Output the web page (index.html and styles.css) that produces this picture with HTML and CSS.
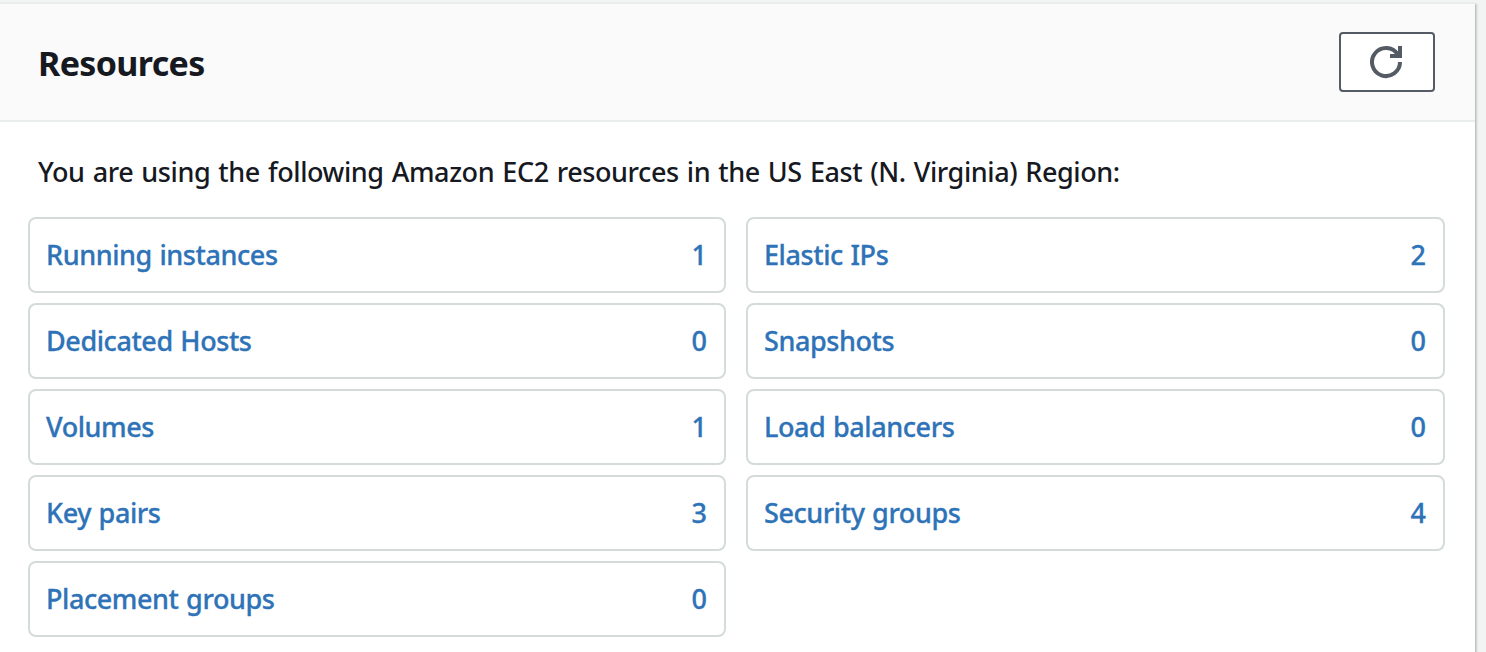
FILE: index.html
```html
<!DOCTYPE html>
<html lang="en">
<head>
<meta charset="utf-8">
<title>Resources</title>
<link rel="stylesheet" href="styles.css">
</head>
<body>
<main class="panel">
  <header class="panel-header">
    <h1 class="title">Resources</h1>
    <button class="refresh" aria-label="Refresh">
      <svg width="36" height="36" viewBox="0 0 36 36" fill="none" stroke="#545b64" stroke-width="4"><path d="M31 18A14 14 0 1 1 28.800 10.500"/><path d="M21 12H31V2"/><path d="M26 7L31 12" stroke-width="3"/><path d="M29 12H33V14H29Z" fill="#545b64" stroke="none"/></svg>
    </button>
  </header>
  <section class="panel-body">
    <p class="intro">You are using the following Amazon EC2 resources in the US East (N. Virginia) Region:</p>
    <div class="grid">
      <a class="card"><span>Running instances</span><b>1</b></a>
      <a class="card"><span>Elastic IPs</span><b>2</b></a>
      <a class="card"><span>Dedicated Hosts</span><b>0</b></a>
      <a class="card"><span>Snapshots</span><b>0</b></a>
      <a class="card"><span>Volumes</span><b>1</b></a>
      <a class="card"><span>Load balancers</span><b>0</b></a>
      <a class="card"><span>Key pairs</span><b>3</b></a>
      <a class="card"><span>Security groups</span><b>4</b></a>
      <a class="card"><span>Placement groups</span><b>0</b></a>
    </div>
  </section>
</main>
</body>
</html>
```

FILE: styles.css
```css
* { box-sizing: border-box; }
body {
  margin: 0;
  height: 652px;
  overflow: hidden;
  padding-top: 2px;
  background: #f2f3f3;
  color: #16191f;
  font-family: "Noto Sans", "Open Sans", sans-serif;
}
.panel {
  width: 1475px;
  height: 660px;
  background: #fff;
  border-top: 2px solid #eaeded;
  box-shadow: 0 2px 2px 0 rgba(0, 28, 36, .3), 2px 2px 2px 0 rgba(0, 28, 36, .15);
}
.panel-header {
  display: flex;
  align-items: center;
  justify-content: space-between;
  height: 118px;
  padding: 0 40px 0 38px;
  background: #fafafa;
  border-bottom: 2px solid #eaeded;
}
.title { margin: 0; padding-top: 2px; font-size: 34px; line-height: 46px; font-weight: 700; letter-spacing: -0.65px; }
.refresh {
  display: flex;
  align-items: center;
  justify-content: center;
  width: 96px;
  height: 60px;
  padding: 0;
  background: #fff;
  border: 2px solid #545b64;
  border-radius: 4px;
}
.panel-body { padding: 30px 30px 0 28px; }
.intro { margin: 0; padding-left: 10px; font-size: 27px; line-height: 40px; font-weight: 500; letter-spacing: -0.42px; word-spacing: 1.5px; white-space: nowrap; }
.grid { display: grid; grid-template-columns: 698px 699px; gap: 10px 20px; margin-top: 25px; }
.card {
  display: flex;
  align-items: center;
  justify-content: space-between;
  height: 76px;
  padding: 0 16px 2px;
  border: 2px solid #d5dbdb;
  border-radius: 8px;
  color: #2e73b8;
  font-size: 27px;
  font-weight: 500;
  letter-spacing: -0.42px;
  word-spacing: 1px;
  -webkit-text-stroke: 0.3px #2e73b8;
}
.card b { font-weight: 500; letter-spacing: 0; padding-right: 1px; }
```
